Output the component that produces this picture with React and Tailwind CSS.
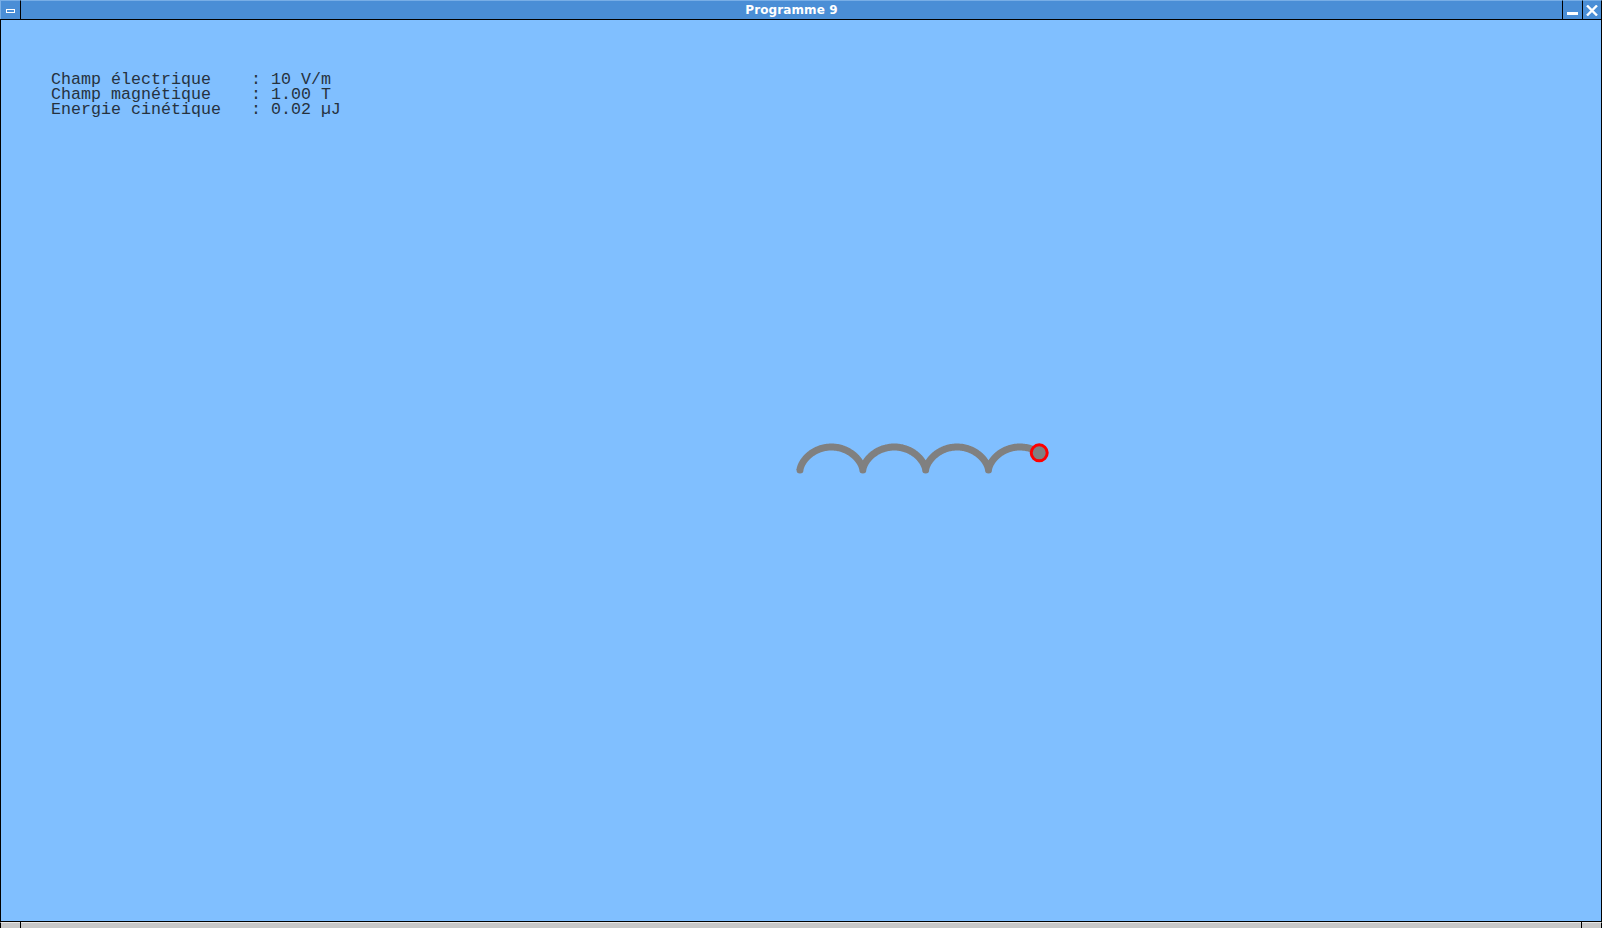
const X0 = 800
const CUSP_Y = 470
const RX = 10
const RY = 11.5
const T_END = 3 * 2 * Math.PI + 4.22

function trajectory() {
  const pts = []
  for (let t = 0; t <= T_END; t += 0.05) {
    const x = X0 + RX * (t - Math.sin(t)) - 1
    const y = CUSP_Y - RY * (1 - Math.cos(t)) - 20
    pts.push(`${x.toFixed(2)},${y.toFixed(2)}`)
  }
  return pts
}

export default function App() {
  const pts = trajectory()
  const last = pts[pts.length - 1].split(',').map(Number)

  return (
    <div className="w-[1602px] h-[928px] flex flex-col bg-black overflow-hidden">

      {/* title bar */}
      <div className="h-[20px] flex flex-shrink-0 border-b border-black bg-[#4a8ed6]">
        <div className="w-[21px] flex items-center justify-center border-r border-black border-t border-t-[#78aee6] border-l border-l-[#78aee6]">
          <div className="w-[9px] h-[4px] border border-white mt-[1px]" />
        </div>
        <div className="flex-1 flex items-center justify-center border-t border-[#78aee6]">
          <span className="text-white font-bold text-[12px] leading-none tracking-[0.1px]" style={{ fontFamily: '"DejaVu Sans", sans-serif' }}>
            Programme 9
          </span>
        </div>
        <div className="w-[20px] flex items-end justify-center pb-[4px] border-l border-black border-t border-t-[#78aee6]">
          <div className="w-[11px] h-[3px] bg-white" />
        </div>
        <div className="w-[20px] flex items-center justify-center border-l border-black border-t border-t-[#78aee6] border-r border-r-black">
          <svg width="12" height="11" viewBox="0 0 12 11">
            <path d="M1 0.5 L11 10.5 M11 0.5 L1 10.5" stroke="white" strokeWidth="2.4" />
          </svg>
        </div>
      </div>

      {/* canvas area */}
      <div className="relative flex-1 bg-[#80bfff] border-l border-r border-black pl-[50px] pt-[52px]">
        <div className="text-[16.67px] leading-[15px] text-[#26323e] whitespace-pre" style={{ fontFamily: '"Liberation Mono", monospace' }}>
          <div>Champ électrique    : 10 V/m</div>
          <div>Champ magnétique    : 1.00 T</div>
          <div>Energie cinétique   : 0.02 µJ</div>
        </div>

        <svg className="absolute inset-0" width="1600" height="901">
          <polyline
            points={pts.join(' ')}
            fill="none"
            stroke="#808080"
            strokeWidth="7"
            strokeLinecap="round"
            strokeLinejoin="round"
          />
          <circle cx={last[0]} cy={last[1]} r="8" fill="#808080" stroke="#ff0000" strokeWidth="3" />
        </svg>
      </div>

      {/* bottom bar */}
      <div className="h-[7px] flex flex-shrink-0 border-t border-black">
        <div className="w-[20px] bg-[#c8c8c8] border-t border-[#e8e8e8] border-l border-l-black" />
        <div className="w-px bg-black" />
        <div className="flex-1 bg-[#c8c8c8] border-t border-[#e8e8e8]" />
        <div className="w-px bg-black" />
        <div className="w-[20px] bg-[#c8c8c8] border-t border-[#e8e8e8] border-r border-r-black" />
      </div>

    </div>
  )
}
